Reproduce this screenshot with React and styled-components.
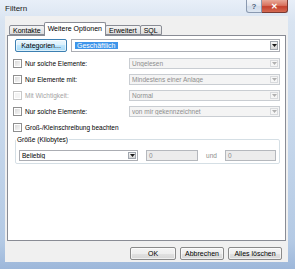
import React from 'react';
import styled, { createGlobalStyle } from 'styled-components';

const Global = createGlobalStyle`
  html, body { margin: 0; padding: 0; background: #ffffff; }
  body { font-family: "Liberation Sans", Arial, sans-serif; }
  * { box-sizing: border-box; }
`;

const Window = styled.div`
  width: 295px;
  height: 269px;
  display: flex;
  flex-direction: column;
  background: linear-gradient(180deg, #e8eff8 0%, #d9e4f1 8%, #c6d7eb 50%, #b3c9e4 90%, #9db7da 100%);
  overflow: hidden;
`;

const TitleBar = styled.div`
  height: 16px;
  flex: 0 0 16px;
  display: flex;
  align-items: flex-start;
  padding-left: 5px;
  padding-right: 7px;
`;

const Title = styled.span`
  font-size: 8px;
  line-height: 8px;
  margin-top: 5px;
  color: #1a1a1a;
`;

const CaptionButtons = styled.div`
  margin-left: auto;
  display: flex;
  height: 13px;
`;

const CaptionButton = styled.div`
  width: ${p => p.$w}px;
  height: 13px;
  display: flex;
  align-items: center;
  justify-content: center;
  font-size: 8px;
  font-weight: bold;
  border: 1px solid ${p => (p.$close ? '#7a3a32' : '#8a99b0')};
  border-top: none;
  border-left: ${p => (p.$close ? 'none' : '1px solid #8a99b0')};
  border-radius: ${p => (p.$close ? '0 0 3px 0' : '0 0 0 3px')};
  color: ${p => (p.$close ? '#ffffff' : '#51627c')};
  background: ${p =>
    p.$close
      ? 'linear-gradient(180deg, #e8a898 0%, #d9735f 45%, #c5412e 55%, #d46a52 100%)'
      : 'linear-gradient(180deg, #f3f6fa 0%, #e3e9f2 45%, #d2dcea 55%, #dde6f1 100%)'};
`;

const Client = styled.div`
  flex: 1;
  margin: 0 7px 7px 5px;
  background: #f0f0f0;
  padding: 6px 2px 2px 2px;
  display: flex;
  flex-direction: column;
`;

const TabStrip = styled.div`
  height: 13px;
  display: flex;
  align-items: flex-end;
  padding-left: 2px;
`;

const Tab = styled.div`
  position: relative;
  z-index: ${p => (p.$active ? 2 : 1)};
  height: ${p => (p.$active ? 14 : 10)}px;
  margin-bottom: ${p => (p.$active ? -1 : 0)}px;
  margin-right: -1px;
  padding: 0 3px;
  font-size: 7px;
  line-height: ${p => (p.$active ? 12 : 9)}px;
  color: #000;
  white-space: nowrap;
  border: 1px solid #898c95;
  border-bottom: ${p => (p.$active ? 'none' : '1px solid #898c95')};
  border-radius: 2px 2px 0 0;
  background: ${p => (p.$active ? '#ffffff' : 'linear-gradient(180deg, #f4f4f4 0%, #e9e9e9 50%, #dcdcdc 100%)')};
`;

const Panel = styled.div`
  height: 206px;
  border: 1px solid #898c95;
  background: #ffffff;
  padding: 3px 5px 0 5px;
  display: flex;
  flex-direction: column;
`;

const TopRow = styled.div`
  display: flex;
  gap: 4px;
  height: 13px;
  margin-left: 2px;
`;

const PushButton = styled.div`
  width: ${p => p.$w}px;
  height: 13px;
  flex: 0 0 auto;
  display: flex;
  align-items: center;
  justify-content: center;
  font-size: 7px;
  color: #000;
  border: 1px solid ${p => (p.$focus ? '#3c7fb1' : '#8a8a8a')};
  border-radius: 2px;
  background: ${p =>
    p.$focus
      ? 'linear-gradient(180deg, #eaf6fd 0%, #d9f0fc 50%, #bee6fd 50%, #a7d9f5 100%)'
      : 'linear-gradient(180deg, #f4f4f4 0%, #eeeeee 50%, #e2e2e2 50%, #d6d6d6 100%)'};
  box-shadow: inset 0 0 0 1px rgba(255, 255, 255, 0.6);
`;

const Combo = styled.div`
  flex: 1;
  height: ${p => p.$h || 11}px;
  display: flex;
  align-items: center;
  border: 1px solid ${p => (p.$disabled ? '#c9cdd2' : '#abadb3')};
  background: ${p => (p.$disabled ? '#f4f4f4' : '#ffffff')};
  padding: 1px 1px 1px 2px;
  font-size: 6.5px;
  color: ${p => (p.$disabled ? '#8d8d8d' : '#000')};
  white-space: nowrap;
  overflow: hidden;
`;

const ComboText = styled.span`
  flex: 1;
  overflow: hidden;
`;

const Selected = styled.span`
  background: #3d95ea;
  color: #ffffff;
  font-size: 7px;
  padding: 1px 2px;
  margin-left: 1px;
`;

const DropButton = styled.div`
  flex: 0 0 8px;
  height: 100%;
  display: flex;
  align-items: center;
  justify-content: center;
  border: 1px solid ${p => (p.$disabled ? '#d8dadd' : '#a0a6ae')};
  background: ${p =>
    p.$disabled ? '#f6f6f6' : 'linear-gradient(180deg, #f4f4f4 0%, #e6e6e6 50%, #d6d6d6 100%)'};
`;

const Arrow = ({ disabled }) => (
  <svg width="5" height="3" viewBox="0 0 5 3">
    <path d="M0 0 L5 0 L2.5 3 Z" fill={disabled ? '#b0b0b0' : '#1a1a1a'} />
  </svg>
);

const Rows = styled.div`
  display: flex;
  flex-direction: column;
  gap: 5px;
  margin-top: 6px;
`;

const Row = styled.div`
  display: flex;
  align-items: center;
  height: 11px;
`;

const CheckLabel = styled.label`
  flex: 0 0 116px;
  display: flex;
  align-items: center;
  gap: 3px;
  font-size: 6.5px;
  color: ${p => (p.$disabled ? '#a3a3a3' : '#000')};
  white-space: nowrap;
`;

const Box = styled.span`
  width: 9px;
  height: 9px;
  flex: 0 0 9px;
  border: 1px solid ${p => (p.$disabled ? '#c8c8c8' : '#8f8f8f')};
  background: ${p =>
    p.$disabled ? '#f4f4f4' : 'linear-gradient(135deg, #d4d4d4 0%, #ececec 60%, #f8f8f8 100%)'};
  box-shadow: inset 0 0 0 1px #ffffff;
`;

const Group = styled.fieldset`
  margin: 2px 0 0 2px;
  padding: 6px 3px 2px 3px;
  border: 1px solid #d5dfe5;
  border-radius: 2px;
  min-width: 0;
`;

const Legend = styled.legend`
  font-size: 6.5px;
  line-height: 9px;
  padding: 0 1px;
  margin-left: -3px;
  color: #000;
`;

const SizeGrid = styled.div`
  display: grid;
  grid-template-columns: 119px 52px 1fr 51px;
  column-gap: 8px;
  align-items: center;
  height: 11px;
`;

const TextBox = styled.div`
  height: 11px;
  border: 1px solid #b5b8bd;
  background: #ececec;
  font-size: 6.5px;
  line-height: 9px;
  padding-left: 2px;
  color: #8d8d8d;
`;

const Und = styled.span`
  font-size: 6.5px;
  color: #8d8d8d;
  text-align: center;
`;

const ButtonRow = styled.div`
  display: flex;
  justify-content: flex-end;
  gap: 4px;
  margin-top: 6px;
  padding-right: 4px;
`;

const rows = [
  { label: 'Nur solche Elemente:', value: 'Ungelesen' },
  { label: 'Nur Elemente mit:', value: 'Mindestens einer Anlage' },
  { label: 'Mit Wichtigkeit:', value: 'Normal', disabled: true },
  { label: 'Nur solche Elemente:', value: 'von mir gekennzeichnet' },
];

export default function App() {
  return (
    <>
      <Global />
      <Window>
        <TitleBar>
          <Title>Filtern</Title>
          <CaptionButtons>
            <CaptionButton $w={16}>?</CaptionButton>
            <CaptionButton $w={26} $close>✕</CaptionButton>
          </CaptionButtons>
        </TitleBar>
        <Client>
          <TabStrip>
            <Tab>Kontakte</Tab>
            <Tab $active>Weitere Optionen</Tab>
            <Tab>Erweitert</Tab>
            <Tab>SQL</Tab>
          </TabStrip>
          <Panel>
            <TopRow>
              <PushButton $w={52} $focus>Kategorien...</PushButton>
              <Combo $h={13}>
                <ComboText>
                  <Selected>Geschäftlich</Selected>
                </ComboText>
                <DropButton>
                  <Arrow />
                </DropButton>
              </Combo>
            </TopRow>
            <Rows>
              {rows.map((r, i) => (
                <Row key={i}>
                  <CheckLabel $disabled={r.disabled}>
                    <Box $disabled={r.disabled} />
                    {r.label}
                  </CheckLabel>
                  <Combo $disabled>
                    <ComboText>{r.value}</ComboText>
                    <DropButton $disabled>
                      <Arrow disabled />
                    </DropButton>
                  </Combo>
                </Row>
              ))}
              <Row>
                <CheckLabel>
                  <Box />
                  Groß-/Kleinschreibung beachten
                </CheckLabel>
              </Row>
            </Rows>
            <Group>
              <Legend>Größe (Kilobytes)</Legend>
              <SizeGrid>
                <Combo>
                  <ComboText>Beliebig</ComboText>
                  <DropButton>
                    <Arrow />
                  </DropButton>
                </Combo>
                <TextBox>0</TextBox>
                <Und>und</Und>
                <TextBox>0</TextBox>
              </SizeGrid>
            </Group>
          </Panel>
          <ButtonRow>
            <PushButton $w={46}>OK</PushButton>
            <PushButton $w={44}>Abbrechen</PushButton>
            <PushButton $w={54}>Alles löschen</PushButton>
          </ButtonRow>
        </Client>
      </Window>
    </>
  );
}
